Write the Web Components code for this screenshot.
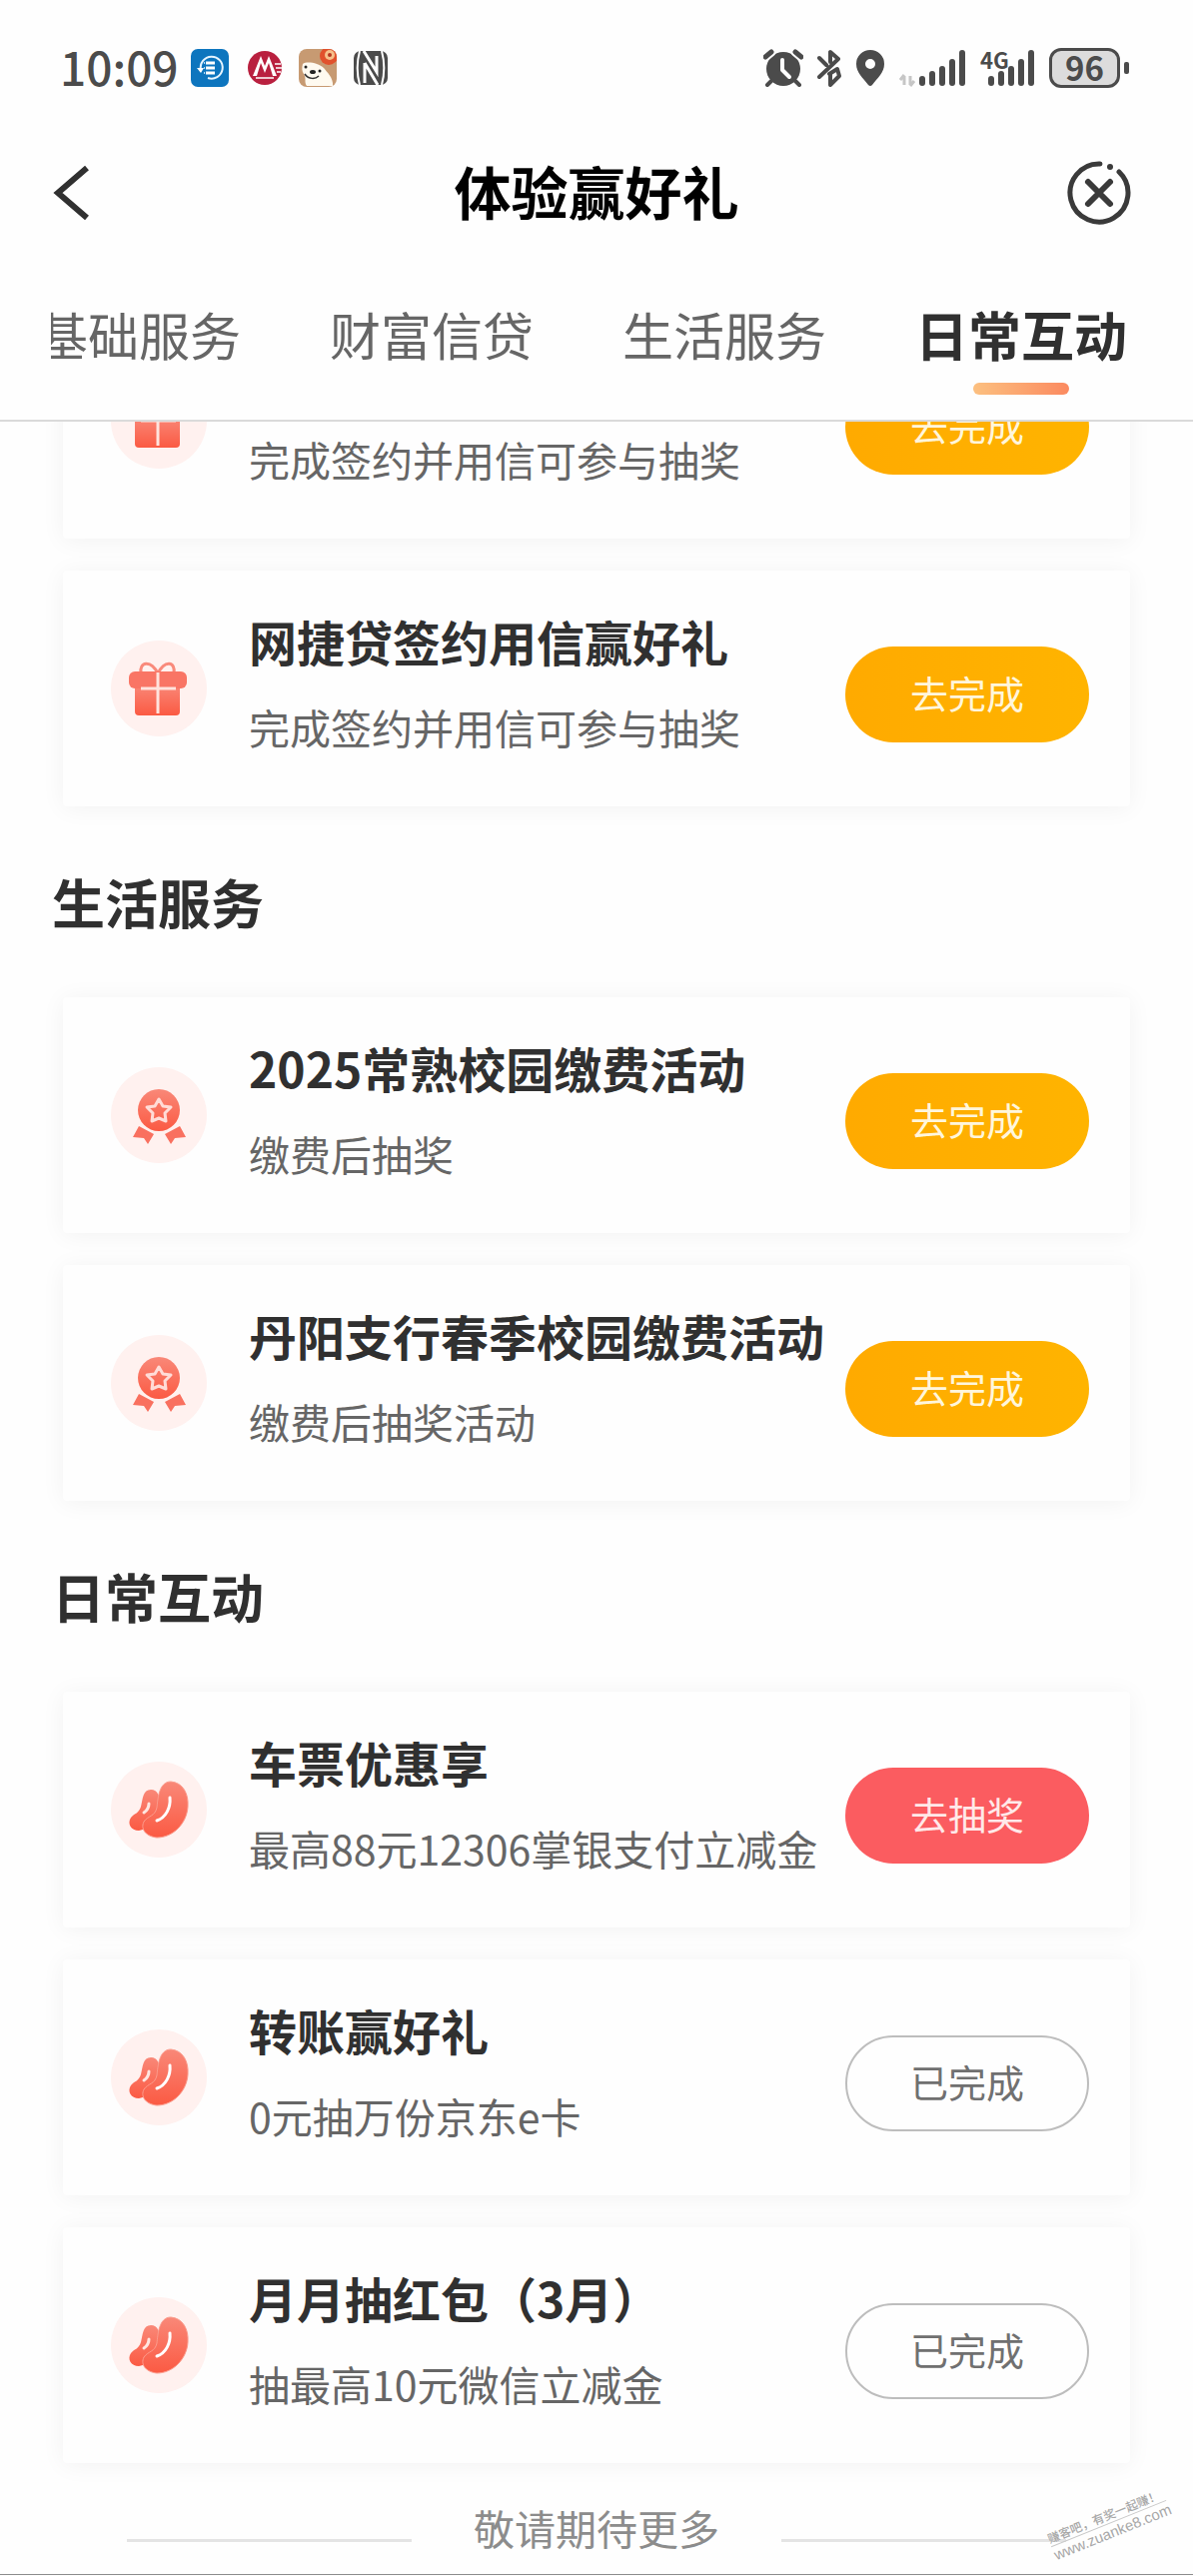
<!DOCTYPE html>
<html lang="zh-CN">
<head>
<meta charset="utf-8">
<meta name="viewport" content="width=device-width, initial-scale=1">
<title>体验赢好礼</title>
<style>
  body { margin: 0; background: #fefefe; color: #333; font-family: "Noto Sans CJK SC", sans-serif; }
</style>
</head>
<body>
<reward-app></reward-app>
<script>
const define = (name, html, setup) => {
  const template = document.createElement('template');
  template.innerHTML = html;
  customElements.define(name, class extends HTMLElement {
    constructor() {
      super();
      this.attachShadow({ mode: 'open' }).append(template.content.cloneNode(true));
    }
    connectedCallback() { if (setup) setup(this, this.shadowRoot); }
  });
};

/* Round badge at the start of each task */
const GRADIENT = '<defs><linearGradient id="g" x1="0" y1="0" x2="0" y2="1"><stop offset="0" stop-color="#f98878"/><stop offset="1" stop-color="#fb5a43"/></linearGradient></defs>';
const BADGES = {
  gift: `<path d="M47 33C40 19 28 21 30 33M47 33C54 19 65 21 63 33" fill="none" stroke="#f98a7b" stroke-width="3"/>
    <path d="M24 44h45v27a4 4 0 0 1-4 4H28a4 4 0 0 1-4-4z" fill="url(#g)"/>
    <rect x="18" y="31" width="58" height="17" rx="6" fill="#f97565"/>
    <path d="M47 32v41M30 48h35" stroke="#ffe3dd" stroke-width="3"/>`,
  medal: `<path d="M28 59L43 67L37 77L33 71L22 70ZM69 59L54 67L60 77L64 71L75 70Z" fill="#f9705f"/>
    <circle cx="48" cy="43" r="21" fill="url(#g)"/>
    <path d="M48 32L52 39L60 40L54 46L55 54L48 51L41 54L42 46L36 40L44 39Z" fill="none" stroke="#ffdcd7" stroke-width="3" stroke-linejoin="round"/>`,
  beans: `<path d="M40 28C47 28 50 35 48 46C44 60 36 68 28 69C20 69 16 62 20 56C23 52 28 52 30 45C32 37 32 28 40 28Z" fill="url(#g)"/>
    <path d="M60 20C72 21 78 32 77 45C76 62 62 76 46 76C36 75 29 68 33 60C37 54 44 55 46 46C47 37 48 20 60 20Z" fill="url(#g)" stroke="#fb9c8d" stroke-width="1"/>
    <path d="M59 36C60 46 55 56 46 59" fill="none" stroke="#fff" stroke-width="3" stroke-linecap="round"/>
    <path d="M38 42C38 46 36 49 33 51" fill="none" stroke="#ffe6e0" stroke-width="3" stroke-linecap="round"/>`
};
define('task-badge', `<style>
  :host { display: block; width: 96px; height: 96px; border-radius: 50%; background: #fff1ef; }
  svg { display: block; }
</style><svg width="96" height="96" viewBox="0 0 96 96" aria-hidden="true"></svg>`,
  (el, root) => { root.querySelector('svg').innerHTML = GRADIENT + (BADGES[el.getAttribute('kind')] || ''); });

define('task-card', `<style>
  :host { display: grid; grid-template-columns: 96px minmax(0, 1fr) 244px; align-items: center;
    margin: 0 63px; padding: 0 41px 0 48px; border-radius: 4px; background: #fefefe;
    box-shadow: 0 2px 24px rgba(0,0,0,.05); }
  .text { padding: 38px 0 52px 42px; white-space: nowrap; }
  h3, p { margin: 0; }
  h3 { min-height: 64px; margin-bottom: 26px; font-size: 48px; line-height: 64px; font-weight: 700; color: #303030; }
  p { font-size: 41px; line-height: 56px; color: #666; }
  button { box-sizing: border-box; width: 100%; height: 96px; margin: 12px 0 0; padding: 0 0 4px;
    border: 0; border-radius: 48px; background: linear-gradient(90deg, #ffaa00, #ffb400);
    color: #fff6dc; font: inherit; font-size: 38px; line-height: 56px; }
  :host([state="draw"]) button { background: #fb5c60; color: #ffe9e9; }
  :host([state="done"]) button { background: #fefefe; border: 2px solid #bdbdbd; color: #707070; }
</style>
<task-badge></task-badge>
<div class="text"><h3><slot name="title"></slot></h3><p><slot></slot></p></div>
<button type="button"></button>`,
  (el, root) => {
    const badge = document.createElement('task-badge');
    badge.setAttribute('kind', el.getAttribute('icon'));
    root.querySelector('task-badge').replaceWith(badge);
    root.querySelector('button').textContent = { draw: '去抽奖', done: '已完成' }[el.getAttribute('state')] || '去完成';
  });

define('task-section', `<style>
  :host { display: block; }
  h2 { margin: 0 52px; padding: 55px 0 56px; font-size: 53px; line-height: 80px; font-weight: 700; color: #303030; }
  .cards { display: flex; flex-direction: column; gap: 32px; }
  :host(:not([heading])) h2 { display: none; }
</style><h2></h2><div class="cards"><slot></slot></div>`,
  (el, root) => { root.querySelector('h2').textContent = el.getAttribute('heading') || ''; });

define('signal-bars', `<style>
  :host { display: block; position: relative; }
  svg { display: block; }
  span { position: absolute; left: 0; top: -4px; font-size: 22px; line-height: 28px; font-weight: 700; }
</style>
<svg height="38" aria-hidden="true"></svg><span><slot></slot></span>`,
  (el, root) => {
    const x = el.hasAttribute('data-arrows') ? 20 : 8, svg = root.querySelector('svg');
    svg.setAttribute('width', x + 47);
    svg.innerHTML = (x === 20 ? '<path d="M5 36V27M1 31L5 26M11 27V36M15 32L11 37" stroke="#c6c6c6" stroke-width="3" fill="none"/>' : '') +
      [27, 22, 17, 10, 1].map((y, i) => `<rect x="${x + i * 10}" y="${y}" width="6" height="${37 - y}" rx="3" fill="#4b4b4b"/>`).join('');
  });

define('status-bar', `<style>
  :host { display: flex; justify-content: space-between; align-items: center; height: 136px; padding: 0 64px 0 60px; color: #4b4b4b; }
  .group { display: flex; align-items: center; gap: 16px; }
  .right { gap: 14px; }
  svg { display: block; }
  time { margin-right: -4px; padding-bottom: 4px; font-size: 46px; line-height: 56px; font-weight: 500; }
  .battery { display: flex; align-items: center; gap: 4px; }
  .cell { box-sizing: border-box; width: 71px; height: 40px; border: 3px solid #4b4b4b; border-radius: 12px;
    background: #dcdcdc; font-size: 33px; line-height: 32px; font-weight: 700; text-align: center; }
  .battery::after { content: ""; width: 5px; height: 12px; border-radius: 2px; background: #4b4b4b; }
</style>
<div class="group">
  <time>10:09</time>
  <svg width="38" height="38" viewBox="0 0 38 38" aria-hidden="true"><rect width="38" height="38" rx="7" fill="#0d75be"/>
    <path d="M9 21A11 11 0 1 1 16 29" transform="translate(1)" fill="none" stroke="#e6f4ff" stroke-width="2"/><path d="M6 19h7l-3 5z" fill="#fff"/>
    <path d="M15 14h9M15 19h9M15 24h9" stroke="#fff" stroke-width="3"/><path d="M13 14h1M13 19h1M13 24h1" stroke="#b9dcf5" stroke-width="2"/></svg>
  <svg width="38" height="38" viewBox="0 0 38 38" aria-hidden="true"><circle cx="20" cy="19" r="17" fill="#b9203f"/>
    <path d="M8 27L16 7L20 17L24 7L32 27H28L24 14L20 24L16 14L12 27Z" fill="#fff"/><path d="M11 29h18M30 15h6M31 19h6M32 23h4" stroke="#fff" stroke-width="1.5"/></svg>
  <svg width="38" height="38" viewBox="0 0 38 38" aria-hidden="true"><clipPath id="c"><rect width="38" height="38" rx="8"/></clipPath><g clip-path="url(#c)"><rect width="38" height="38" fill="#c79a72"/>
    <path d="M4 15C8 12 20 14 25 19C28 23 35 29 34 37H8C5 33 8 29 5 25C3 22 3 19 4 15Z" fill="#fffaf0"/>
    <circle cx="30" cy="7" r="9" fill="#e1512c"/><circle cx="31" cy="6" r="5" fill="#f6c08a"/><circle cx="31" cy="6" r="2" fill="#b7351f"/>
    <ellipse cx="14" cy="23" rx="3" ry="2" fill="#222"/><circle cx="7" cy="18" r="1.5" fill="#222"/><circle cx="21" cy="22" r="1.5" fill="#222"/>
    <path d="M6 25C10 31 17 30 20 27" fill="none" stroke="#333" stroke-width="1.5"/></g></svg>
  <svg width="36" height="36" viewBox="0 0 36 36" aria-hidden="true"><rect x="1" y="1" width="34" height="34" rx="7" fill="#4b4b4b"/>
    <path d="M7 1C4 12 4 24 7 35M29 1C32 12 32 24 29 35" fill="none" stroke="#fff" stroke-width="2"/>
    <path d="M11 1L24 22V6M12 13V33M12 13L25 35" fill="none" stroke="#fff" stroke-width="3"/></svg>
</div>
<div class="group right">
  <svg width="40" height="38" viewBox="0 0 40 38" aria-hidden="true"><circle cx="20" cy="20" r="17" fill="#4b4b4b"/>
    <path d="M8 32L4 36M32 32L36 36" stroke="#4b4b4b" stroke-width="4" stroke-linecap="round"/>
    <path d="M2 8L8 3M38 8L32 3" stroke="#fefefe" stroke-width="9" stroke-linecap="round"/>
    <path d="M2 8L8 3M38 8L32 3" stroke="#4b4b4b" stroke-width="5" stroke-linecap="round"/>
    <path d="M19 11V21L26 28" fill="none" stroke="#fff" stroke-width="4" stroke-linecap="round" stroke-linejoin="round"/></svg>
  <svg width="24" height="38" viewBox="0 0 24 38" aria-hidden="true"><path d="M2 9L9 16M2 28L21 10L13 3V13M12 25L20 20L22 27L13 36V25" fill="none" stroke="#4b4b4b" stroke-width="4" stroke-linejoin="round" stroke-linecap="round"/></svg>
  <svg width="30" height="38" viewBox="0 0 30 38" aria-hidden="true"><path fill-rule="evenodd" d="M15 1A14 14 0 0 1 29 15C29 24 22 29 17 36Q15 38 13 36C8 29 1 24 1 15A14 14 0 0 1 15 1ZM15 10A5 5 0 1 0 15 20A5 5 0 1 0 15 10Z" fill="#4b4b4b"/></svg>
  <signal-bars data-arrows></signal-bars>
  <signal-bars>4G</signal-bars>
  <div class="battery"><div class="cell">96</div></div>
</div>`);

define('nav-bar', `<style>
  :host { display: flex; justify-content: space-between; align-items: center; height: 114px; padding: 0 50px; }
  h1 { margin: 0; padding-bottom: 6px; font-size: 57px; line-height: 80px; font-weight: 700; color: #000; }
  button { width: 76px; height: 64px; margin: 0; padding: 0; border: 0; background: none; }
  svg { display: block; }
</style>
<button type="button" aria-label="返回"><svg width="64" height="64" viewBox="0 0 64 64"><path d="M37 7L8 32L37 57" fill="none" stroke="#303030" stroke-width="6"/></svg></button>
<h1>体验赢好礼</h1>
<button type="button" aria-label="关闭"><svg width="64" height="64" viewBox="0 0 64 64" fill="none" stroke="#3a3a3a" stroke-width="5" stroke-linecap="round">
  <path d="M33 3A29 29 0 1 0 52 11"/><circle cx="43" cy="6" r="3" fill="#3a3a3a" stroke="none"/><path d="M21 21L43 43M43 21L21 43" stroke-width="6"/></svg></button>`);

define('category-tabs', `<style>
  :host { display: block; padding: 44px 66px 25px 51px; border-bottom: 2px solid #dadada; }
  div { display: flex; justify-content: flex-end; gap: 89px; overflow: hidden; }
  button { display: flex; flex: none; flex-direction: column; align-items: center; gap: 9px; margin: 0; padding: 0; border: 0; background: none;
    color: #666; font: inherit; font-size: 51px; line-height: 80px; white-space: nowrap; }
  [aria-selected="true"] { color: #303030; font-size: 53px; font-weight: 700; }
  button::after { content: ""; width: 96px; height: 12px; border-radius: 6px; }
  [aria-selected="true"]::after { background: linear-gradient(90deg, #fcc080, #fb8a60); }
</style>
<div role="tablist">
  <button type="button" role="tab" aria-selected="false">基础服务</button>
  <button type="button" role="tab" aria-selected="false">财富信贷</button>
  <button type="button" role="tab" aria-selected="false">生活服务</button>
  <button type="button" role="tab" aria-selected="true">日常互动</button>
</div>`);

define('site-mark', `<style>
  :host { display: block; width: 124px; transform: rotate(-22deg); color: #a8a8a8; white-space: nowrap; }
  span { display: block; font-size: 12px; line-height: 16px; font-weight: 500; border-bottom: 1px solid #c8c8c8; }
  small { display: block; font-family: "Liberation Sans", sans-serif; font-size: 15px; line-height: 18px; }
</style><span>赚客吧，有奖一起赚！</span><small>www.zuanke8.com</small>`);

define('list-end', `<style>
  :host { display: flex; align-items: center; gap: 62px; position: relative; height: 111px; padding: 0 127px; border-bottom: 1px solid #8c8c8c;
    font-size: 41px; line-height: 56px; color: #8c8c8c; }
  p { margin: 0; padding-top: 16px; }
  i { flex: 1; height: 3px; margin-top: 44px; background: #e4e4e4; }
  site-mark { position: absolute; right: 22px; bottom: 32px; }
</style><i></i><p>敬请期待更多</p><i></i><site-mark></site-mark>`);

define('reward-app', `<style>
  :host { display: block; overflow: hidden; }
  header { position: relative; z-index: 1; background: #fefefe; }
  /* The list is scrolled: its first card runs under the header */
  main { margin-top: -119px; }
</style>
<header><status-bar></status-bar><nav-bar></nav-bar><category-tabs></category-tabs></header>
<main>
  <task-section>
    <task-card icon="gift">完成签约并用信可参与抽奖</task-card>
    <task-card icon="gift"><span slot="title">网捷贷签约用信赢好礼</span>完成签约并用信可参与抽奖</task-card>
  </task-section>
  <task-section heading="生活服务">
    <task-card icon="medal"><span slot="title">2025常熟校园缴费活动</span>缴费后抽奖</task-card>
    <task-card icon="medal"><span slot="title">丹阳支行春季校园缴费活动</span>缴费后抽奖活动</task-card>
  </task-section>
  <task-section heading="日常互动">
    <task-card icon="beans" state="draw"><span slot="title">车票优惠享</span>最高88元12306掌银支付立减金</task-card>
    <task-card icon="beans" state="done"><span slot="title">转账赢好礼</span>0元抽万份京东e卡</task-card>
    <task-card icon="beans" state="done"><span slot="title">月月抽红包（3月）</span>抽最高10元微信立减金</task-card>
  </task-section>
</main>
<list-end></list-end>`);
</script>
</body>
</html>
